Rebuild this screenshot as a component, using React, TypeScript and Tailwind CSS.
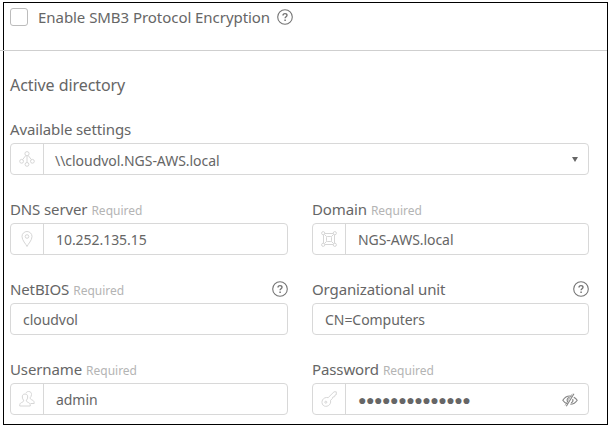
import type { ReactNode } from "react";

function HelpIcon() {
  return (
    <svg width="16" height="16" viewBox="0 0 16 16" fill="none" stroke="#757575" className="shrink-0">
      <circle cx="8" cy="8" r="7.3" strokeWidth="1.1" />
      <path d="M6 6.4C6 5.2 6.8 4.6 8 4.6s2 .7 2 1.7c0 1.4-1.9 1.5-1.9 3" strokeWidth="1.4" />
      <path d="M8.1 10.4v1.5" strokeWidth="1.5" />
    </svg>
  );
}

function LineIcon({ children }: { children: ReactNode }) {
  return (
    <svg width="16" height="16" viewBox="0 0 16 16" fill="none" stroke="#d6d6d6" strokeWidth="1" strokeLinejoin="round">
      {children}
    </svg>
  );
}

function TreeIcon() {
  return (
    <LineIcon>
      <circle cx="8" cy="2.7" r="2.1" />
      <circle cx="2.6" cy="10.3" r="1.9" />
      <circle cx="13.4" cy="10.3" r="1.9" />
      <circle cx="8" cy="13.4" r="1.9" />
      <path d="M8 4.8v6.7M6.8 4.5L3.6 8.6M9.2 4.5l3.2 4.1" />
    </LineIcon>
  );
}

function PinIcon() {
  return (
    <LineIcon>
      <path d="M8 15.500C7 13 3 9.500 3 5.500a5 5 0 0 1 10 0C13 9.500 9 13 8 15.500z" />
      <circle cx="8" cy="5.500" r="1.800" />
    </LineIcon>
  );
}

function DomainIcon() {
  return (
    <LineIcon>
      <circle cx="2.2" cy="2.2" r="1.6" />
      <circle cx="13.800" cy="2.2" r="1.6" />
      <circle cx="2.2" cy="13.800" r="1.6" />
      <circle cx="13.800" cy="13.800" r="1.6" />
      <rect x="5.500" y="5.500" width="5" height="5" rx="1" />
      <path d="M3.800 2.500h8.400M3.800 13.500h8.400M2.500 3.800v8.400M13.500 3.800v8.400M3.400 3.400l2.300 2.300M12.600 3.400l-2.300 2.300M3.400 12.600l2.300-2.300M12.600 12.600l-2.300-2.300" />
    </LineIcon>
  );
}

function UsersIcon() {
  return (
    <LineIcon>
      <path d="M6 3C4.100 3 3.200 4.300 3.300 6c.1 1.500.6 2.500 1.300 3.200 0 1.400-.5 1.700-2 2.300-1.500.6-1.900 1.500-1.900 3.500h10.600c0-2-.4-2.900-1.900-3.500-1.500-.6-2-.9-2-2.300C8.100 8.500 8.700 7.500 8.700 6 8.800 4.300 7.900 3 6 3z" />
      <path d="M7 2.100C7.500 1 8.300.5 9.600.5c2 0 3 1.300 2.900 3-.1 1.500-.6 2.500-1.300 3.200 0 1.400.6 1.700 2 2.300 1.500.6 2 1.500 2 3.500h-3.600" />
    </LineIcon>
  );
}

function KeyIcon() {
  return (
    <LineIcon>
      <path d="M7.200 6.600L13 .8h2.300v2.800l-1.300.5-.4 1.600-1.700.3-.5 1.600-1.900 1.700c1.200 5-4.500 7.600-7.300 5C-.8 11.200 1.900 5.500 7.200 6.600z" />
      <circle cx="4.800" cy="11.200" r="1" />
    </LineIcon>
  );
}

function HiddenEyeIcon() {
  return (
    <svg width="16" height="14" viewBox="0 0 16 14" fill="none" stroke="#858585" strokeWidth="1.1">
      <path d="M5.800 11C3.700 10.400 1.900 9 .8 7.200 3 4 6.400 2.500 9.700 3.300M11.800 4.200c1.400.7 2.500 1.700 3.400 3-1.600 2.600-4.200 4-6.900 4.100" />
      <path d="M5.900 9.200C4.400 7.400 5 5 7.400 4.300M10.700 6c.7 1.800-.1 3.200-1.600 3.900M12 .8L4.300 13.300" />
      <path d="M10.300.8L3 12.500" strokeWidth=".6" />
    </svg>
  );
}

interface FieldProps {
  label: string;
  value: string;
  required?: boolean;
  help?: boolean;
  icon?: ReactNode;
  trailing?: ReactNode;
  valueClass?: string;
}

function Field({ label, value, required, help, icon, trailing, valueClass = "pl-3 pt-0.5 tracking-[-0.05px]" }: FieldProps) {
  return (
    <div className="flex h-[54px] min-w-0 flex-col">
      <div className="flex h-[22px] items-start justify-between">
        <div className="flex items-baseline gap-1 leading-4">
          <span className="text-[15px] tracking-[-0.12px]">{label}</span>
          {required && <span className="text-xs text-[#b4b4b4]">Required</span>}
        </div>
        {help && <HelpIcon />}
      </div>
      <div className="flex h-8 items-stretch rounded border border-[#d8d8d8]">
        {icon && (
          <div className="flex w-[33px] items-center justify-center border-r border-[#d8d8d8]">{icon}</div>
        )}
        <div className={`flex flex-1 items-center text-sm ${valueClass}`}>{value}</div>
        {trailing && <div className="flex items-center pr-2.5">{trailing}</div>}
      </div>
    </div>
  );
}

export default function App() {
  return (
    <div className="h-[428px] w-[611px] bg-white pl-[3px] pt-[2px] font-['Noto_Sans','Open_Sans',sans-serif] text-[#666]">
      <div className="h-[423px] w-[605px] border border-black">
        <div className="-ml-1 flex h-12 items-start border-b border-[#cfcfcf] pl-2.5 pt-[5px]">
          <div className="size-[18px] rounded-[3px] border border-[#bcbcbc]" />
          <span className="ml-2.5 text-[15px] leading-[19px] tracking-[-0.05px]">Enable SMB3 Protocol Encryption</span>
          <div className="ml-[7px] pt-px">
            <HelpIcon />
          </div>
        </div>
        <div className="pl-1.5 pr-[18px] pt-6">
          <h2 className="text-base leading-5 tracking-[-0.07px]">Active directory</h2>
          <div className="mt-[26px]">
            <Field
              label="Available settings"
              value="\\cloudvol.NGS-AWS.local"
              icon={<TreeIcon />}
              valueClass="pl-[11px] pt-1 tracking-[-0.04px]"
              trailing={
                <svg width="6" height="5" viewBox="0 0 6 5" fill="#666">
                  <path d="M0 0h6L3 5z" />
                </svg>
              }
            />
          </div>
          <div className="mt-[26px] grid grid-cols-[278px_277px] gap-x-6 gap-y-[26px]">
            <Field label="DNS server" required value="10.252.135.15" icon={<PinIcon />} />
            <Field label="Domain" required value="NGS-AWS.local" icon={<DomainIcon />} />
            <Field label="NetBIOS" required help value="cloudvol" />
            <Field label="Organizational unit" help value="CN=Computers" />
            <Field label="Username" required value="admin" icon={<UsersIcon />} />
            <Field
              label="Password"
              required
              value="●●●●●●●●●●●●●●"
              valueClass="pl-3 pt-0.5 tracking-[-0.43px]"
              icon={<KeyIcon />}
              trailing={<div className="pt-0.5"><HiddenEyeIcon /></div>}
            />
          </div>
        </div>
      </div>
    </div>
  );
}
